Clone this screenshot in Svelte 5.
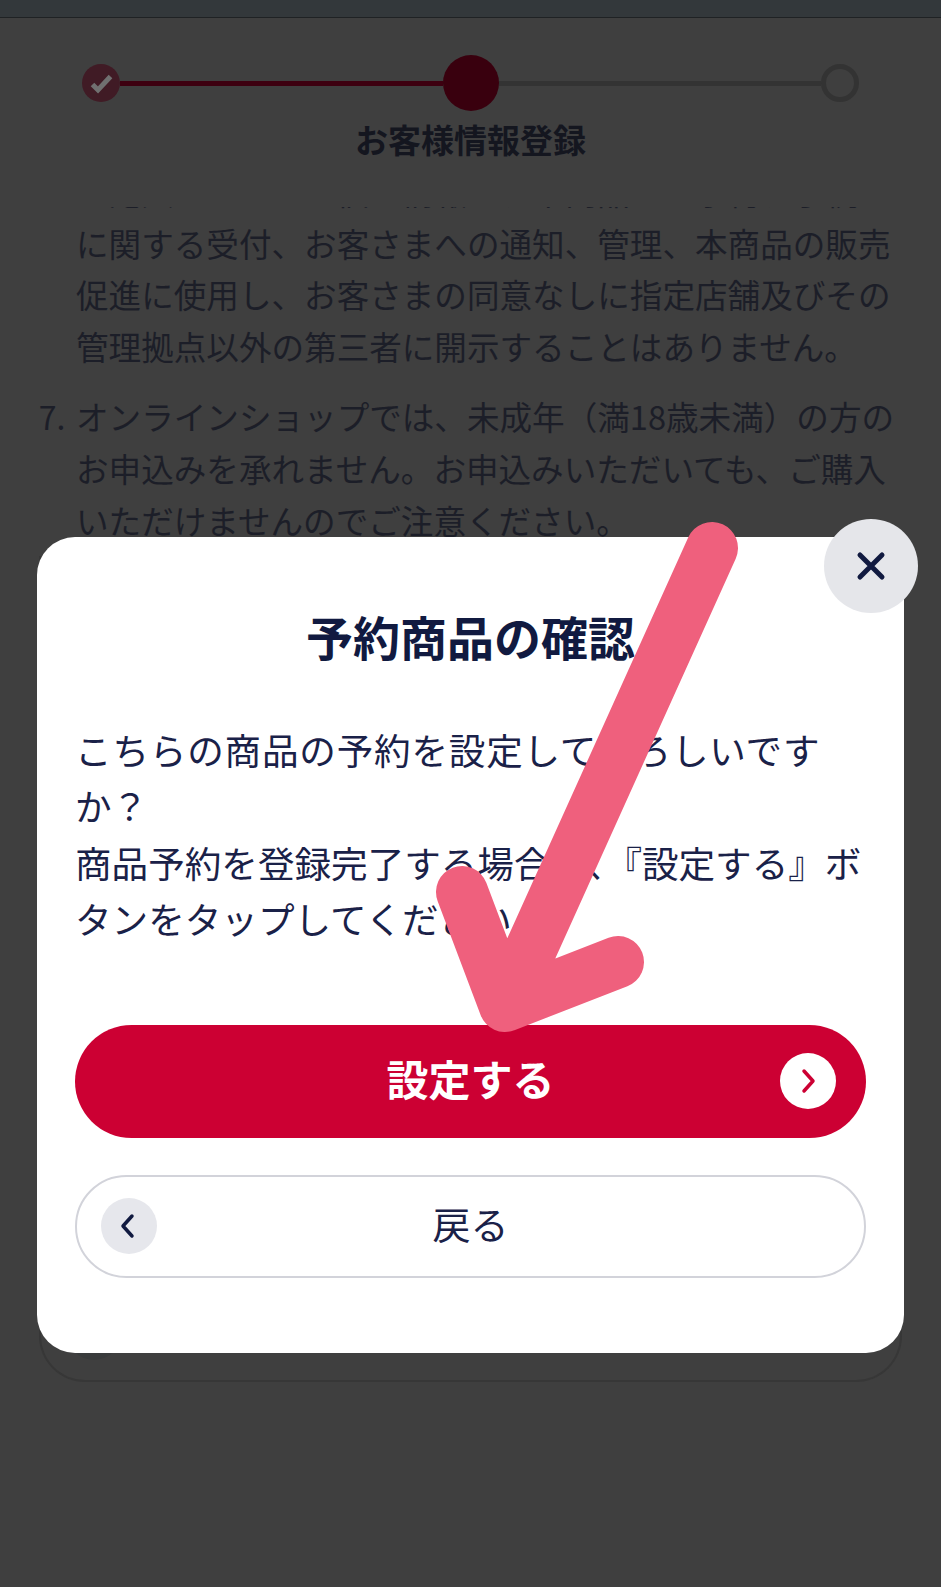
<script>
  // Fondo: pasos del formulario y condiciones, atenuados por el modal
  const steps = [
    { kind: 'done' },
    { kind: 'current' },
    { kind: 'todo' }
  ];
</script>

<div class="page">
  <div class="status-bar"></div>

  <header class="stepper-wrap">
    <div class="stepper">
      {#each steps as step, i}
        {#if i > 0}
          <span class="line" class:line-done={step.kind !== 'todo'}></span>
        {/if}
        <span class="dot dot-{step.kind}">
          {#if step.kind === 'done'}
            <svg viewBox="0 0 38 38" width="38" height="38" aria-hidden="true">
              <path d="M10.5 20.5 L16 26 L28.5 12.5" fill="none" stroke="#707070" stroke-width="5" />
            </svg>
          {/if}
        </span>
      {/each}
    </div>
    <h2 class="step-title">お客様情報登録</h2>
  </header>

  <div class="terms">
    <ol class="terms-list" start="6">
      <li>ご記入いただいた個人情報は、本商品のご予約、手続きに関する受付、お客さまへの通知、管理、本商品の販売促進に使用し、お客さまの同意なしに指定店舗及びその管理拠点以外の第三者に開示することはありません。</li>
      <li>オンラインショップでは、未成年（満18歳未満）の方のお申込みを承れません。お申込みいただいても、ご購入いただけませんのでご注意ください。</li>
    </ol>
  </div>

  <section class="behind-card">
    <span class="radio"></span>
  </section>

  <div class="overlay">
    <div class="modal">
      <button class="close" aria-label="閉じる">
        <svg viewBox="0 0 32 32" width="32" height="32" aria-hidden="true">
          <path d="M5 5 L27 27 M27 5 L5 27" fill="none" stroke="#111a40" stroke-width="5" stroke-linecap="round" />
        </svg>
      </button>

      <h1 class="modal-title">予約商品の確認</h1>
      <p class="modal-body"><span class="lead">こちらの商品の予約を設定してよろしいです</span>か？<br />商品予約を登録完了する場合は、『設定する』ボタンをタップしてください。</p>

      <button class="btn btn-primary">
        <span></span>
        <span class="btn-label">設定する</span>
        <span class="btn-icon icon-light">
          <svg viewBox="0 0 56 56" width="56" height="56" aria-hidden="true">
            <path d="M24 18 L33 28 L24 38" fill="none" stroke="#cc0033" stroke-width="3.5" stroke-linecap="round" stroke-linejoin="round" />
          </svg>
        </span>
      </button>

      <button class="btn btn-secondary">
        <span class="btn-icon icon-grey">
          <svg viewBox="0 0 56 56" width="56" height="56" aria-hidden="true">
            <path d="M31 18 L22 28 L31 38" fill="none" stroke="#111a40" stroke-width="3.5" stroke-linecap="round" stroke-linejoin="round" />
          </svg>
        </span>
        <span class="btn-label">戻る</span>
        <span></span>
      </button>
    </div>
  </div>

  <!-- flecha dibujada encima de la captura -->
  <svg class="arrow" viewBox="0 0 941 1587" aria-hidden="true">
    <path d="M712 548 L508 1000 M462 892 L505 1006 L618 962" fill="none" stroke="#ef607d" stroke-width="52" stroke-linecap="round" stroke-linejoin="round" />
  </svg>
</div>

<style>
  :global(body) {
    margin: 0;
    background: #3f3f3f;
  }

  .page {
    position: relative;
    min-height: 1587px;
    background: #3f3f3f;
    font-family: "Noto Sans CJK JP", "Noto Sans", sans-serif;
    overflow: hidden;
  }

  .status-bar {
    height: 17px;
    background: #33383b;
    border-bottom: 1px solid #1f2224;
  }

  .stepper-wrap {
    padding: 37px 82px 45px;
  }

  .stepper {
    display: flex;
    align-items: center;
  }

  .line {
    flex: 1;
    height: 5px;
    background: #333;
  }

  .line-done {
    background: #3d0010;
  }

  .dot {
    flex: none;
    box-sizing: border-box;
    border-radius: 50%;
    display: block;
  }

  .dot svg {
    display: block;
  }

  .dot-done {
    width: 38px;
    height: 38px;
    background: #401b25;
  }

  .dot-current {
    width: 56px;
    height: 56px;
    background: #39000e;
  }

  .dot-todo {
    width: 38px;
    height: 38px;
    border: 5px solid #333;
  }

  .step-title {
    margin: 6px 0 1px;
    font-size: 33px;
    line-height: 44px;
    font-weight: 700;
    text-align: center;
    color: #14161f;
  }

  .terms {
    height: 349px;
    overflow: hidden;
    color: #1c1e28;
  }

  .terms-list {
    margin: -42px 0 0;
    padding: 0 44px 0 76px;
    font-size: 32.6px;
    line-height: 51.6px;
  }

  .terms-list li {
    margin-bottom: 19px;
  }

  .terms-list li::marker {
    content: counter(list-item) ".\2004";
    font-size: 32px;
  }

  .behind-card {
    margin: 0 39px;
    height: 826px;
    box-sizing: border-box;
    border: 2px solid #373737;
    border-top: none;
    border-radius: 0 0 46px 46px;
    display: flex;
    align-items: flex-end;
    padding: 0 0 20px 25px;
  }

  .radio {
    width: 56px;
    height: 56px;
    border-radius: 50%;
    background: #393b3c;
  }

  .overlay {
    position: absolute;
    top: 537px;
    left: 37px;
    width: 867px;
  }

  .modal {
    position: relative;
    background: #fff;
    border-radius: 38px;
    box-sizing: border-box;
    height: 816px;
    padding: 69px 38px 0;
    color: #1a2148;
  }

  .close {
    position: absolute;
    top: -18px;
    right: -14px;
    width: 94px;
    height: 94px;
    padding: 0;
    border: none;
    border-radius: 50%;
    background: #e5e6ea;
    display: flex;
    align-items: center;
    justify-content: center;
  }

  .modal-title {
    margin: 0;
    font-size: 47px;
    line-height: 60px;
    font-weight: 700;
    text-align: center;
    color: #111a40;
  }

  .modal-body {
    margin: 56px 0 77px;
    font-size: 36.6px;
    line-height: 56.4px;
    font-weight: 400;
  }

  .lead {
    letter-spacing: 0.8px;
  }

  .btn {
    display: grid;
    grid-template-columns: 1fr auto 1fr;
    align-items: center;
    width: 100%;
    box-sizing: border-box;
    font-family: inherit;
    border-radius: 60px;
  }

  .btn-label {
    display: block;
  }

  .btn-primary {
    height: 113px;
    margin-bottom: 37px;
    padding: 0 30px;
    border: none;
    background: #cc0033;
    color: #fff;
    font-size: 42px;
    font-weight: 700;
  }

  .btn-primary .btn-label {
    padding-bottom: 8px;
  }

  .btn-primary .btn-icon {
    justify-self: end;
  }

  .btn-secondary {
    height: 103px;
    padding: 0 24px;
    border: 2.5px solid #d2d3da;
    background: #fff;
    color: #1a2148;
    font-size: 38px;
    font-weight: 400;
  }

  .btn-secondary .btn-label {
    padding-bottom: 8px;
  }

  .btn-secondary .btn-icon {
    justify-self: start;
  }

  .btn-icon {
    width: 56px;
    height: 56px;
    border-radius: 50%;
    display: block;
  }

  .btn-icon svg {
    display: block;
  }

  .icon-light {
    background: #fff;
  }

  .icon-grey {
    background: #e6e7ec;
  }

  .arrow {
    position: absolute;
    top: 0;
    left: 0;
    width: 941px;
    height: 1587px;
    pointer-events: none;
  }
</style>
